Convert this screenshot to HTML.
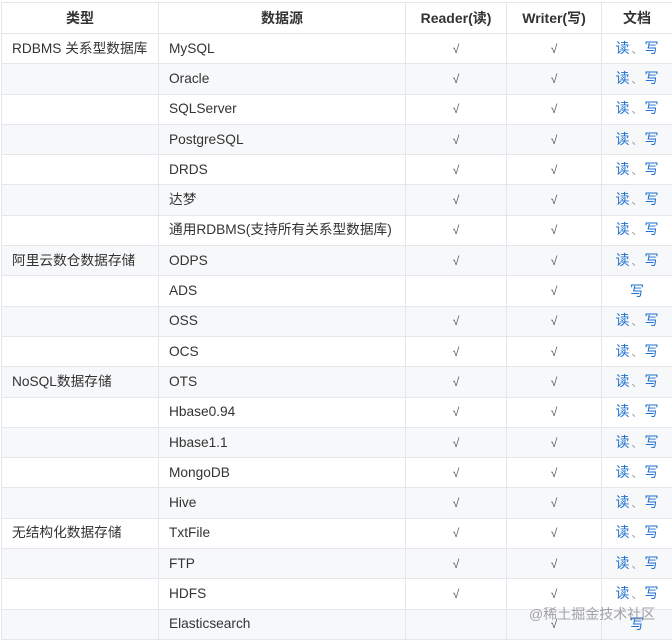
<!DOCTYPE html>
<html><head><style>
body{margin:0;background:#fff;font-family:"Liberation Sans","Noto Sans CJK SC",sans-serif;color:#333}
table{position:absolute;left:1px;top:2px;border-collapse:collapse;table-layout:fixed;width:671px}
td,th{border:1px solid #e4e7eb;padding:0 10px;white-space:nowrap;overflow:hidden;line-height:16px;vertical-align:middle;font-size:13.7px}
tr{height:30.3px}
tr.h{height:31px}
th{font-weight:bold;text-align:center;color:#333;font-size:14px}
tr:nth-child(odd) td{background:#f7f8fa}
td.c{text-align:center;color:#555;font-size:12px}
td.d{text-align:center;color:#1e6fcf;font-size:14px}
.d span{color:#999;margin:0 2px;font-size:11px}
.wm{position:absolute;left:529px;top:604px;color:rgba(140,140,140,.8);font-size:14px}
</style></head><body>
<table>
<colgroup><col style="width:157px"><col style="width:247px"><col style="width:101px"><col style="width:95px"><col style="width:71px"></colgroup>
<tr class="h"><th>类型</th><th>数据源</th><th>Reader(读)</th><th>Writer(写)</th><th>文档</th></tr>
<tr><td>RDBMS 关系型数据库</td><td>MySQL</td><td class="c">√</td><td class="c">√</td><td class="d">读<span>、</span>写</td></tr>
<tr><td></td><td>Oracle</td><td class="c">√</td><td class="c">√</td><td class="d">读<span>、</span>写</td></tr>
<tr><td></td><td>SQLServer</td><td class="c">√</td><td class="c">√</td><td class="d">读<span>、</span>写</td></tr>
<tr><td></td><td>PostgreSQL</td><td class="c">√</td><td class="c">√</td><td class="d">读<span>、</span>写</td></tr>
<tr><td></td><td>DRDS</td><td class="c">√</td><td class="c">√</td><td class="d">读<span>、</span>写</td></tr>
<tr><td></td><td>达梦</td><td class="c">√</td><td class="c">√</td><td class="d">读<span>、</span>写</td></tr>
<tr><td></td><td>通用RDBMS(支持所有关系型数据库)</td><td class="c">√</td><td class="c">√</td><td class="d">读<span>、</span>写</td></tr>
<tr><td>阿里云数仓数据存储</td><td>ODPS</td><td class="c">√</td><td class="c">√</td><td class="d">读<span>、</span>写</td></tr>
<tr><td></td><td>ADS</td><td class="c"></td><td class="c">√</td><td class="d">写</td></tr>
<tr><td></td><td>OSS</td><td class="c">√</td><td class="c">√</td><td class="d">读<span>、</span>写</td></tr>
<tr><td></td><td>OCS</td><td class="c">√</td><td class="c">√</td><td class="d">读<span>、</span>写</td></tr>
<tr><td>NoSQL数据存储</td><td>OTS</td><td class="c">√</td><td class="c">√</td><td class="d">读<span>、</span>写</td></tr>
<tr><td></td><td>Hbase0.94</td><td class="c">√</td><td class="c">√</td><td class="d">读<span>、</span>写</td></tr>
<tr><td></td><td>Hbase1.1</td><td class="c">√</td><td class="c">√</td><td class="d">读<span>、</span>写</td></tr>
<tr><td></td><td>MongoDB</td><td class="c">√</td><td class="c">√</td><td class="d">读<span>、</span>写</td></tr>
<tr><td></td><td>Hive</td><td class="c">√</td><td class="c">√</td><td class="d">读<span>、</span>写</td></tr>
<tr><td>无结构化数据存储</td><td>TxtFile</td><td class="c">√</td><td class="c">√</td><td class="d">读<span>、</span>写</td></tr>
<tr><td></td><td>FTP</td><td class="c">√</td><td class="c">√</td><td class="d">读<span>、</span>写</td></tr>
<tr><td></td><td>HDFS</td><td class="c">√</td><td class="c">√</td><td class="d">读<span>、</span>写</td></tr>
<tr><td></td><td>Elasticsearch</td><td class="c"></td><td class="c">√</td><td class="d">写</td></tr>
</table>
<div class="wm">@稀土掘金技术社区</div>
</body></html>
